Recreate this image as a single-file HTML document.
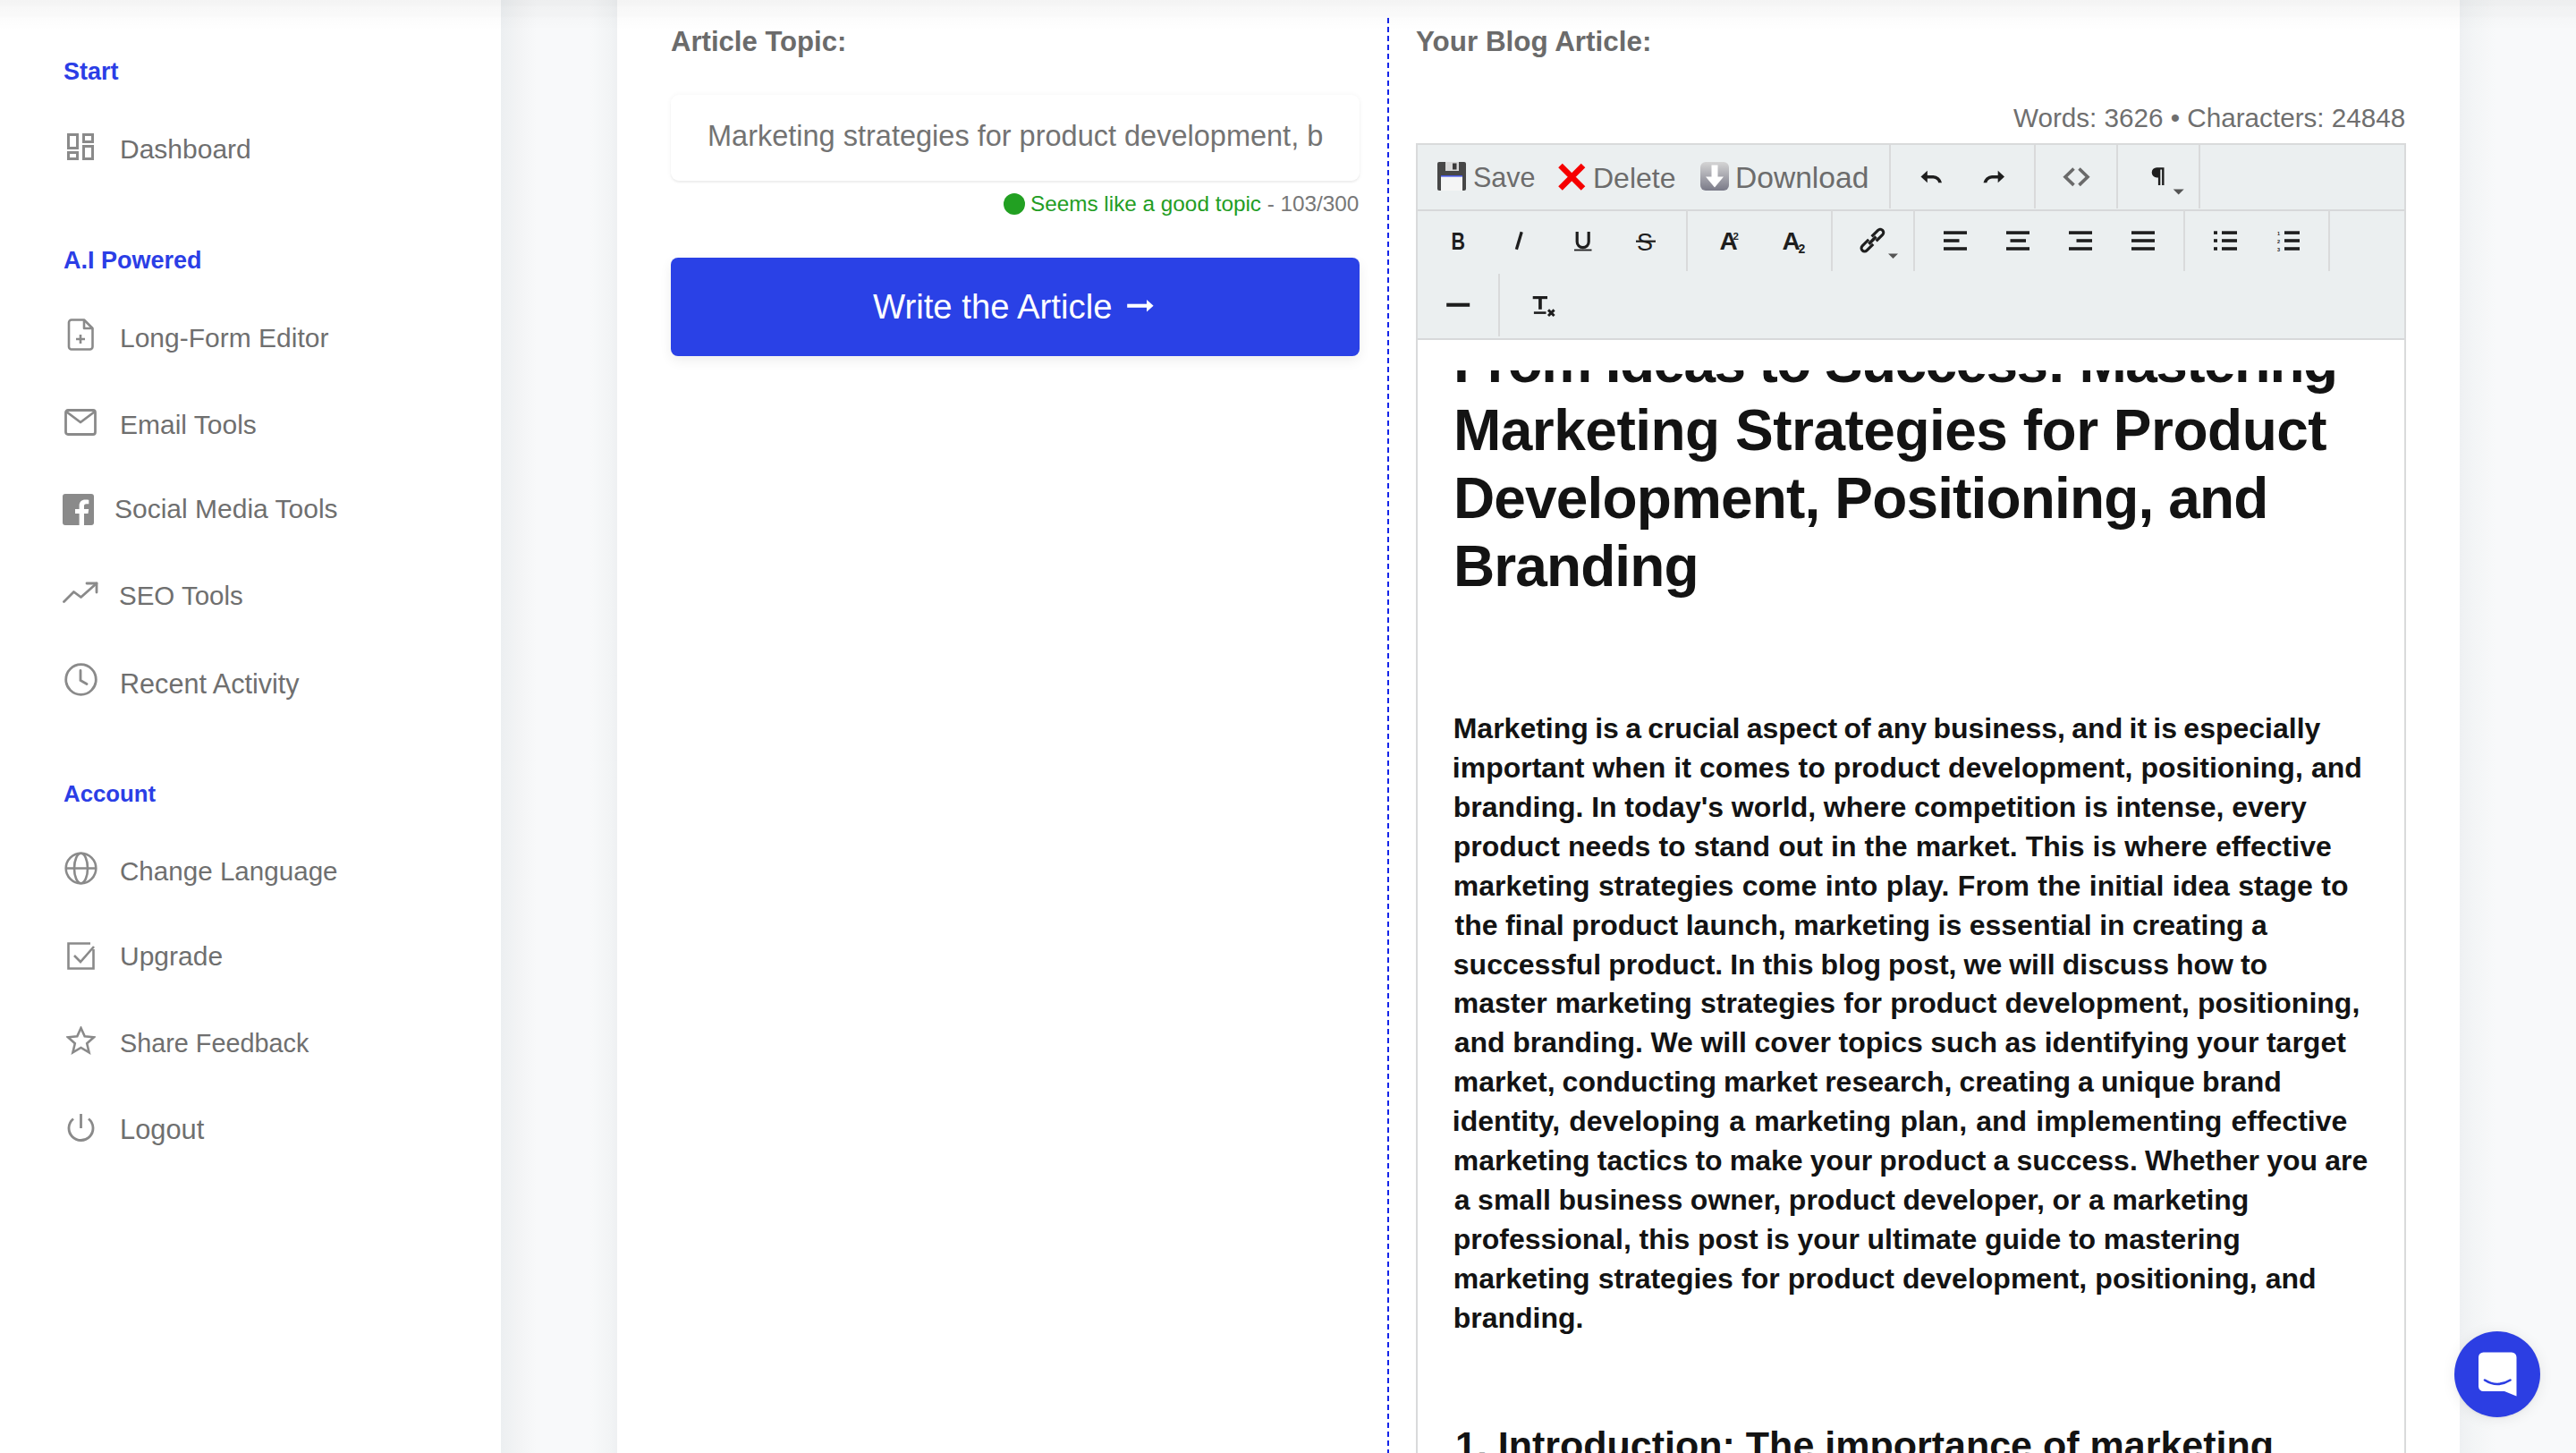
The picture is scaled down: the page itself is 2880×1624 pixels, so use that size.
<!DOCTYPE html>
<html><head><meta charset="utf-8">
<style>
html,body{margin:0;padding:0;}
@media (max-width:2000px){html{zoom:0.5;}}
body{width:2880px;height:1624px;overflow:hidden;position:relative;background:#f6f7f8;font-family:"Liberation Sans",sans-serif;}
.abs{position:absolute;}
.t{position:absolute;white-space:nowrap;line-height:1;font-family:"Liberation Sans",sans-serif;}
#sidebar{left:0;top:0;width:560px;height:1624px;background:#fff;}
#card{left:690px;top:0;width:2060px;height:1624px;background:#fff;}
.nav{font-size:30px;color:#6f6f6f;}
.hdr{font-size:27px;color:#2b3ee6;font-weight:bold;}
.ico{position:absolute;}
.pl{color:#131313;font-weight:bold;}
.tb{color:#6c6c6c;}
</style></head>
<body>
<!-- shadows in gap -->
<div class="abs" style="left:560px;top:0;width:130px;height:1624px;background:linear-gradient(to right,#eceff1 0px,#f3f4f5 20px,#f8f9fa 40px,#f8f9fa 100px,#f2f4f5 122px,#eef0f2 130px);"></div>
<div class="abs" style="left:2750px;top:0;width:130px;height:1624px;background:linear-gradient(to right,#eef0f2 0px,#f3f5f6 16px,#f8f9fa 40px);"></div>
<div id="sidebar" class="abs"></div>
<div id="card" class="abs"></div>

<!-- SIDEBAR -->
<div class="t hdr" style="left:71px;top:67px;">Start</div>
<div class="t hdr" style="left:71px;top:278px;">A.I Powered</div>
<div class="t hdr" style="left:71px;top:875px;font-size:25.8px;">Account</div>

<div class="t nav" style="left:134px;top:152.0px;">Dashboard</div>
<div class="t nav" style="left:134px;top:363.0px;">Long-Form Editor</div>
<div class="t nav" style="left:134px;top:460.0px;">Email Tools</div>
<div class="t nav" style="left:128px;top:554.0px;">Social Media Tools</div>
<div class="t nav" style="left:133px;top:651.4px;font-size:29.5px;">SEO Tools</div>
<div class="t nav" style="left:134px;top:748.5px;font-size:30.6px;">Recent Activity</div>
<div class="t nav" style="left:134px;top:959.3px;font-size:29.6px;">Change Language</div>
<div class="t nav" style="left:134px;top:1054.0px;">Upgrade</div>
<div class="t nav" style="left:134px;top:1152.0px;font-size:28.8px;">Share Feedback</div>
<div class="t nav" style="left:134px;top:1247.8px;font-size:30.8px;">Logout</div>

<!-- sidebar icons -->
<svg class="ico" style="left:75px;top:149px" width="30" height="30" viewBox="0 0 30 30" fill="none" stroke="#8a8a8a" stroke-width="3"><rect x="1.5" y="1.5" width="10" height="15"/><rect x="18.5" y="1.5" width="10" height="8"/><rect x="1.5" y="21.5" width="10" height="7"/><rect x="18.5" y="14.5" width="10" height="14"/></svg>
<svg class="ico" style="left:75px;top:356px" width="30" height="36" viewBox="0 0 30 36" fill="none" stroke="#8a8a8a" stroke-width="2.6" stroke-linejoin="round"><path d="M5 1.5h14l9.5 9.5v20.5a3 3 0 0 1-3 3H5a3 3 0 0 1-3-3v-27a3 3 0 0 1 3-3z"/><path d="M19 1.5v9.5h9.5"/><path d="M15 18v10M10 23h10"/></svg>
<svg class="ico" style="left:72px;top:457px" width="36" height="30" viewBox="0 0 36 30" fill="none" stroke="#8a8a8a" stroke-width="2.8" stroke-linejoin="round"><rect x="1.5" y="1.5" width="33" height="27" rx="2.5"/><path d="M2 3l16 12L34 3"/></svg>
<svg class="ico" style="left:70px;top:552px" width="35" height="35" viewBox="0 0 35 35"><rect x="0" y="0" width="35" height="35" rx="3" fill="#8a8a8a"/><path d="M24 35V22h4.5l.7-5H24v-3.2c0-1.5.4-2.5 2.6-2.5h2.7V6.8c-.5-.1-2.1-.2-4-.2-4 0-6.7 2.4-6.7 6.9V17H14v5h4.6v13z" fill="#fff"/></svg>
<svg class="ico" style="left:70px;top:650px" width="40" height="26" viewBox="0 0 40 26" fill="none" stroke="#8a8a8a" stroke-width="2.8" stroke-linecap="round" stroke-linejoin="round"><path d="M1.5 22.5l11-11 8 6L38 2"/><path d="M27 2h11v10"/></svg>
<svg class="ico" style="left:72px;top:741px" width="37" height="37" viewBox="0 0 37 37" fill="none" stroke="#8a8a8a" stroke-width="2.8" stroke-linecap="round"><circle cx="18.5" cy="18.5" r="16.8"/><path d="M18 8.5v11l7 4"/></svg>
<svg class="ico" style="left:72px;top:952px" width="37" height="37" viewBox="0 0 37 37" fill="none" stroke="#8a8a8a" stroke-width="2.6"><circle cx="18.5" cy="18.5" r="16.8"/><ellipse cx="18.5" cy="18.5" rx="7.5" ry="16.8"/><path d="M1.7 18.5h33.6"/></svg>
<svg class="ico" style="left:75px;top:1053px" width="31" height="31" viewBox="0 0 31 31" fill="none" stroke="#8a8a8a" stroke-width="2.6"><path d="M26 1.5H1.5v28h28V8"/><path d="M8 15l7 7L30 5"/></svg>
<svg class="ico" style="left:74px;top:1147px" width="33" height="32" viewBox="0 0 33 32" fill="none" stroke="#8a8a8a" stroke-width="2.6" stroke-linejoin="miter"><path d="M16.5 2l4.2 9.3 10.3 1-7.8 6.9 2.4 10.1-9.1-5.4-9.1 5.4 2.4-10.1L2 12.3l10.3-1z"/></svg>
<svg class="ico" style="left:75px;top:1245px" width="31" height="31" viewBox="0 0 31 31" fill="none" stroke="#8a8a8a" stroke-width="2.8"><path d="M15.5 0v16"/><path d="M24 5.5A13.5 13.5 0 1 1 7 5.5"/></svg>

<!-- MAIN LEFT COLUMN -->
<div class="t" style="left:750px;top:31px;font-size:31.1px;font-weight:bold;color:#6b6b6b;">Article Topic:</div>
<div class="abs" style="left:750px;top:106px;width:770px;height:96px;background:#fff;border-radius:9px;box-shadow:0 0 5px 1px rgba(0,0,0,0.035),0 2px 2px rgba(0,0,0,0.05);"></div>
<div class="t" style="left:791px;top:136px;font-size:32.5px;color:#737373;">Marketing strategies for product development, b</div>
<svg class="ico" style="left:1122px;top:216px" width="24" height="24"><circle cx="12" cy="12" r="12" fill="#22a022"/></svg>
<div class="t" style="left:1152px;top:216px;font-size:24.3px;color:#239d23;">Seems like a good topic <span style="color:#777">- 103/300</span></div>
<div class="abs" style="left:750px;top:288px;width:770px;height:110px;background:#2a41e6;border-radius:8px;box-shadow:0 5px 14px rgba(0,0,0,0.07);"></div>
<div class="t" style="left:976px;top:323.5px;font-size:38.3px;color:#fff;">Write the Article</div>
<svg class="ico" style="left:1255px;top:330px" width="40" height="24" viewBox="1255 330 40 24"><rect x="1260.2" y="339.7" width="23" height="4.1" fill="#fff"/><path d="M1282 334.9L1289.6 341.75 1282 348.6z" fill="#fff"/></svg>

<!-- dashed divider -->
<div class="abs" style="left:1551px;top:20px;width:2px;height:1604px;background:repeating-linear-gradient(to bottom,#1424e8 0px,#1424e8 6px,transparent 6px,transparent 10px);"></div>

<!-- RIGHT COLUMN -->
<div class="t" style="left:1583px;top:31px;font-size:31.4px;font-weight:bold;color:#6b6b6b;">Your Blog Article:</div>
<div class="t" style="left:2251px;top:117px;font-size:29.65px;color:#6f6f6f;">Words: 3626 &bull; Characters: 24848</div>

<!-- EDITOR -->
<div class="abs" style="left:1583px;top:160px;width:1107px;height:1464px;background:#fff;box-sizing:border-box;border:2px solid #d9dadb;border-bottom:none;"></div>
<div class="abs" style="left:1585px;top:162px;width:1103px;height:216px;background:#ebeff0;"></div>
<div class="abs" style="left:1585px;top:234px;width:1103px;height:2px;background:#d7d8da;"></div>
<div class="abs" style="left:1585px;top:378px;width:1103px;height:2px;background:#d7d8da;"></div>
<div id="content" class="abs" style="left:1585px;top:380px;width:1103px;height:1244px;overflow:hidden;">
<div class="abs" style="left:-1585px;top:-380px;width:2880px;height:1624px;">
<div class="t pl" style="left:1624.9px;top:372.6px;font-size:64px;word-spacing:0px;letter-spacing:-1.594px;">From Ideas to Success: Mastering</div>
<div class="t pl" style="left:1624.9px;top:448.6px;font-size:64px;word-spacing:0px;letter-spacing:-0.498px;">Marketing Strategies for Product</div>
<div class="t pl" style="left:1624.9px;top:524.6px;font-size:64px;word-spacing:0px;letter-spacing:-0.846px;">Development, Positioning, and</div>
<div class="t pl" style="left:1624.9px;top:600.6px;font-size:64px;word-spacing:0px;letter-spacing:-0.886px;">Branding</div>
<div class="t pl" style="left:1624.7px;top:798.1px;font-size:32px;word-spacing:-1.58px;">Marketing is a crucial aspect of any business, and it is especially</div>
<div class="t pl" style="left:1623.8px;top:842.0px;font-size:32px;word-spacing:0.23px;">important when it comes to product development, positioning, and</div>
<div class="t pl" style="left:1624.7px;top:885.9px;font-size:32px;word-spacing:-0.15px;">branding. In today's world, where competition is intense, every</div>
<div class="t pl" style="left:1624.7px;top:929.8px;font-size:32px;word-spacing:0.21px;">product needs to stand out in the market. This is where effective</div>
<div class="t pl" style="left:1624.7px;top:973.7px;font-size:32px;word-spacing:0.56px;">marketing strategies come into play. From the initial idea stage to</div>
<div class="t pl" style="left:1626.5px;top:1017.6px;font-size:32px;word-spacing:-0.44px;">the final product launch, marketing is essential in creating a</div>
<div class="t pl" style="left:1624.8px;top:1061.5px;font-size:32px;word-spacing:-0.89px;">successful product. In this blog post, we will discuss how to</div>
<div class="t pl" style="left:1624.7px;top:1105.4px;font-size:32px;word-spacing:0.31px;">master marketing strategies for product development, positioning,</div>
<div class="t pl" style="left:1625.7px;top:1149.3px;font-size:32px;word-spacing:-0.33px;">and branding. We will cover topics such as identifying your target</div>
<div class="t pl" style="left:1624.7px;top:1193.2px;font-size:32px;word-spacing:-0.81px;">market, conducting market research, creating a unique brand</div>
<div class="t pl" style="left:1623.8px;top:1237.1px;font-size:32px;word-spacing:1.27px;">identity, developing a marketing plan, and implementing effective</div>
<div class="t pl" style="left:1624.7px;top:1281.0px;font-size:32px;word-spacing:-0.71px;">marketing tactics to make your product a success. Whether you are</div>
<div class="t pl" style="left:1625.7px;top:1324.9px;font-size:32px;word-spacing:-0.28px;">a small business owner, product developer, or a marketing</div>
<div class="t pl" style="left:1624.7px;top:1368.8px;font-size:32px;word-spacing:-0.24px;">professional, this post is your ultimate guide to mastering</div>
<div class="t pl" style="left:1624.7px;top:1412.7px;font-size:32px;word-spacing:0.21px;">marketing strategies for product development, positioning, and</div>
<div class="t pl" style="left:1624.7px;top:1456.6px;font-size:32px;word-spacing:0.00px;">branding.</div>
<div class="t pl" style="left:1627px;top:1594px;font-size:43px;">1. Introduction: The importance of marketing</div>
</div>
<div class="abs" style="left:0;top:0;width:1103px;height:34px;background:#fff;"></div>
</div>
<svg class="abs" style="left:0;top:0" width="2880" height="400" viewBox="0 0 2880 400">
 <g fill="#d9dadb">
  <rect x="2112" y="162" width="2" height="71"/><rect x="2274" y="162" width="2" height="71"/><rect x="2366" y="162" width="2" height="71"/><rect x="2458" y="162" width="2" height="71"/>
  <rect x="1885" y="235" width="2" height="68"/><rect x="2047" y="235" width="2" height="68"/><rect x="2139" y="235" width="2" height="68"/><rect x="2441" y="235" width="2" height="68"/><rect x="2603" y="235" width="2" height="68"/>
  <rect x="1675" y="306" width="2" height="70"/>
 </g>
 <!-- floppy -->
 <g>
  <rect x="1607" y="181" width="32" height="32" rx="2" fill="#474747"/>
  <rect x="1616" y="181" width="15" height="10" fill="#d8d8d8"/>
  <rect x="1624" y="182.5" width="4.5" height="7" fill="#3a3a3a"/>
  <rect x="1611" y="196" width="24" height="17" fill="#f5f5f5"/>
  <rect x="1611" y="196" width="24" height="1.6" fill="#4a58e0"/>
 </g>
 <!-- red X -->
 <path d="M1744.5 185L1770 210.5M1770 185L1744.5 210.5" stroke="#f60000" stroke-width="6.5"/>
 <!-- download -->
 <defs><linearGradient id="dg" x1="0" y1="0" x2="0" y2="1"><stop offset="0" stop-color="#d5d5d5"/><stop offset="1" stop-color="#7a7a88"/></linearGradient></defs>
 <rect x="1901" y="181" width="32" height="32" rx="6" fill="url(#dg)"/>
 <path d="M1913.5 184.5h7v13h6.5l-10 12-10-12h6.5z" fill="#fff"/>
 <!-- undo / redo -->
 <g fill="#1e1e1e">
  <path d="M2147.5 197.5l7.3-6.8v13.6z"/>
  <path d="M2153 196h8.5a10 10 0 0 1 9.5 8.3h-3.8a6.5 6.5 0 0 0-5.7-4.8H2153z"/>
  <path d="M2241 197.5l-7.3-6.8v13.6z"/>
  <path d="M2235.5 196h-8.5a10 10 0 0 0-9.5 8.3h3.8a6.5 6.5 0 0 1 5.7-4.8h8.5z"/>
 </g>
 <!-- code view -->
 <path d="M2318.5 188.5l-9.5 9.2 9.5 9.2M2324.5 188.5l9.5 9.2-9.5 9.2" fill="none" stroke="#6a6a6a" stroke-width="3.6"/>
 <!-- pilcrow -->
 <path d="M2419.5 187.2h-8.2a5.6 5.6 0 0 0 0 11.2h1.6v8.6h2.4v-17.6h1.8v17.6h2.4z" fill="#1e1e1e"/>
 <path d="M2429.7 211.4h12l-6 6z" fill="#555"/>
 <!-- link triangle -->
 <path d="M2111 283.6h11l-5.5 5.4z" fill="#555"/>
 <!-- B I U S -->
 <text x="1622.5" y="279" font-family="Liberation Sans" font-weight="bold" font-size="28" textLength="15.5" lengthAdjust="spacingAndGlyphs" fill="#1e1e1e">B</text>
 <path d="M1701.2 259.2L1695.4 278.8" stroke="#1e1e1e" stroke-width="3.3"/>
 <path d="M1763.2 259v11.2a6.5 6.5 0 0 0 13 0V259" fill="none" stroke="#1e1e1e" stroke-width="3.2"/>
 <rect x="1760" y="278.6" width="19.5" height="1.8" fill="#1e1e1e"/>
 <text x="1830" y="279.5" font-family="Liberation Sans" font-weight="normal" font-size="27" fill="#1e1e1e">S</text>
 <rect x="1829" y="268.6" width="22" height="2.2" fill="#1e1e1e"/>
 <!-- A2 -->
 <text x="1922.5" y="279" font-family="Liberation Sans" font-weight="bold" font-size="28" fill="#1e1e1e">A</text>
 <text x="1937.6" y="267.5" font-family="Liberation Sans" font-weight="bold" font-size="11.5" fill="#1e1e1e">2</text>
 <text x="1992.5" y="279" font-family="Liberation Sans" font-weight="bold" font-size="28" fill="#1e1e1e">A</text>
 <text x="2010.5" y="282.5" font-family="Liberation Sans" font-weight="bold" font-size="14" fill="#1e1e1e">2</text>
 <!-- link -->
 <g transform="translate(2093.4 268.6) rotate(-45)" fill="none" stroke="#1e1e1e" stroke-width="3.1">
  <path d="M-2.4 -3.6H-12.4A3.6 3.6 0 0 0 -12.4 3.6H-2.4"/>
  <path d="M2.4 -3.6H12.4A3.6 3.6 0 0 1 12.4 3.6H2.4"/>
  <path d="M-5.8 0H5.8" stroke-width="3.4"/>
 </g>
 <!-- align -->
 <g fill="#1e1e1e">
  <rect x="2173" y="258.3" width="26" height="3.6"/><rect x="2173" y="267.2" width="17.5" height="3.6"/><rect x="2173" y="276.2" width="26" height="3.6"/>
  <rect x="2243" y="258.3" width="26" height="3.6"/><rect x="2247.5" y="267.2" width="17.5" height="3.6"/><rect x="2243" y="276.2" width="26" height="3.6"/>
  <rect x="2313" y="258.3" width="26" height="3.6"/><rect x="2321.5" y="267.2" width="17.5" height="3.6"/><rect x="2313" y="276.2" width="26" height="3.6"/>
  <rect x="2383" y="258.3" width="26" height="3.6"/><rect x="2383" y="267.2" width="26" height="3.6"/><rect x="2383" y="276.2" width="26" height="3.6"/>
  <rect x="2475" y="258.3" width="4" height="3.6"/><rect x="2475" y="267.2" width="4" height="3.6"/><rect x="2475" y="276.2" width="4" height="3.6"/>
  <rect x="2484" y="258.3" width="17" height="3.6"/><rect x="2484" y="267.2" width="17" height="3.6"/><rect x="2484" y="276.2" width="17" height="3.6"/>
  <rect x="2554" y="258.3" width="17" height="3.6"/><rect x="2554" y="267.2" width="17" height="3.6"/><rect x="2554" y="276.2" width="17" height="3.6"/>
 </g>
 <g font-family="Liberation Sans" font-size="5.5" font-weight="bold" fill="#1e1e1e">
  <text x="2546" y="262.5">1</text><text x="2546" y="271.5">2</text><text x="2546" y="280.5">3</text>
 </g>
 <!-- hr -->
 <rect x="1617.2" y="338.7" width="26" height="4.1" fill="#1e1e1e"/>
 <!-- Tx -->
 <rect x="1713.7" y="331" width="16.3" height="3.2" fill="#1e1e1e"/>
 <rect x="1720.1" y="333" width="3.7" height="12.8" fill="#1e1e1e"/>
 <rect x="1714.9" y="348.3" width="13.6" height="2.6" fill="#1e1e1e"/>
 <path d="M1731 346.4l6.6 6.6M1737.6 346.4l-6.6 6.6" stroke="#1e1e1e" stroke-width="2.9"/>
</svg>
<div class="t tb" style="left:1647px;top:183px;font-size:30.5px;">Save</div>
<div class="t tb" style="left:1781px;top:182.5px;font-size:32px;">Delete</div>
<div class="t tb" style="left:1940px;top:182px;font-size:33.6px;">Download</div>

<!-- chat bubble -->
<div class="abs" style="left:2744px;top:1488px;width:96px;height:96px;border-radius:50%;background:#2c3ee3;box-shadow:0 2px 16px rgba(0,0,0,0.08),0 1px 3px rgba(0,0,0,0.06);"></div>
<svg class="abs" style="left:2744px;top:1488px" width="96" height="96" viewBox="2744 1488 96 96">
 <path d="M2776.5 1511.5h31.5a5.5 5.5 0 0 1 5.5 5.5v43.5l-13.5-5.5h-23.5a5.5 5.5 0 0 1-5.5-5.5v-32.5a5.5 5.5 0 0 1 5.5-5.5z" fill="#fff"/>
 <path d="M2778 1542.5q14 9 28.5 0" fill="none" stroke="#2c3ee3" stroke-width="2.6" stroke-linecap="round"/>
</svg>
<!-- top shadow -->
<div class="abs" style="left:0;top:0;width:2880px;height:32px;background:linear-gradient(to bottom,rgba(0,0,0,0.045) 0px,rgba(0,0,0,0.04) 6px,rgba(0,0,0,0.027) 8px,rgba(0,0,0,0.024) 18px,rgba(0,0,0,0.012) 20px,rgba(0,0,0,0.004) 31px,rgba(0,0,0,0) 32px);"></div>
</body></html>
